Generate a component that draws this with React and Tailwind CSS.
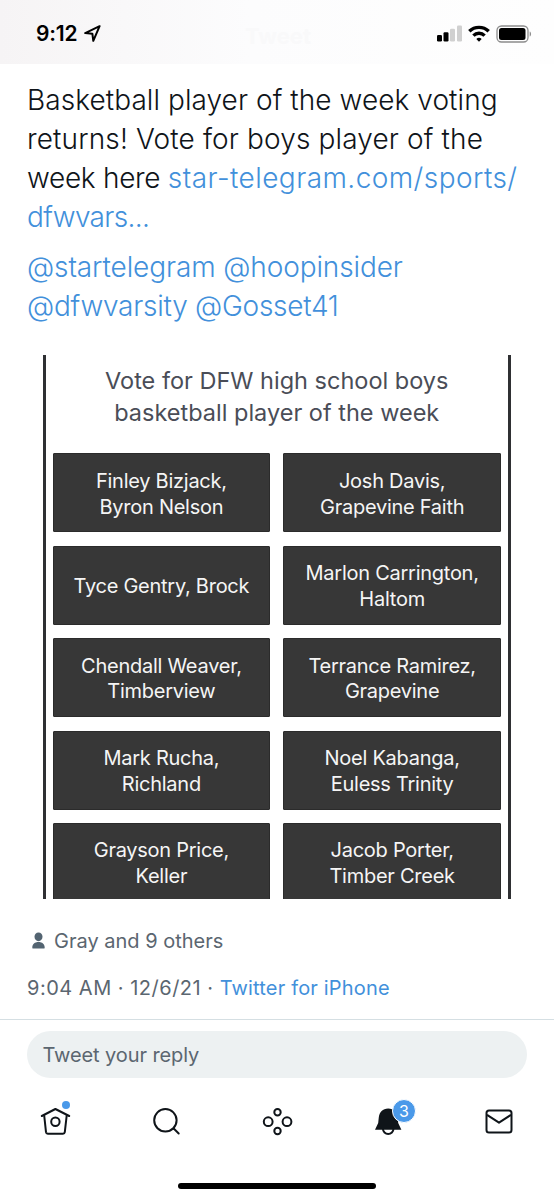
import React from 'react';

const players = [
  ['Finley Bizjack,', 'Byron Nelson'],
  ['Josh Davis,', 'Grapevine Faith'],
  ['Tyce Gentry, Brock'],
  ['Marlon Carrington,', 'Haltom'],
  ['Chendall Weaver,', 'Timberview'],
  ['Terrance Ramirez,', 'Grapevine'],
  ['Mark Rucha,', 'Richland'],
  ['Noel Kabanga,', 'Euless Trinity'],
  ['Grayson Price,', 'Keller'],
  ['Jacob Porter,', 'Timber Creek'],
];

const StatusBar = () => (
  <header className="relative h-16 shrink-0 flex items-center justify-between pl-[36px] pr-[22px] pt-[3px] bg-linear-to-r from-[#f6f4f5] via-[#fcfcfd] via-45% to-[#fefefe]">
    <div className="flex items-center gap-[7px]">
      <span className="text-[21px] leading-6 font-semibold tracking-[-0.2px] text-black">9:12</span>
      <svg width="17" height="17" viewBox="0 0 17 17" fill="none" stroke="#000" strokeWidth="2" strokeLinejoin="round">
        <path d="M15.6 1.2 1.2 8.1 8.4 8.8 9.3 15.8Z" />
      </svg>
    </div>
    <span className="absolute left-[245px] top-[22px] text-[22px] leading-7 font-bold text-[#f9f9fa]">Tweet</span>
    <div className="flex items-center">
      <svg width="26" height="17" viewBox="0 0 26 17">
        <rect x="0" y="10" width="5" height="6.5" rx="1.2" fill="#000" />
        <rect x="6.5" y="7.3" width="5" height="9.2" rx="1.2" fill="#000" />
        <rect x="13" y="3.8" width="5" height="12.7" rx="1.2" fill="#d0d0d0" />
        <rect x="20" y="0.5" width="5" height="16" rx="1.2" fill="#d0d0d0" />
      </svg>
      <svg className="ml-[5px]" width="22" height="17" viewBox="0 0 22 17" fill="none" stroke="#000" strokeWidth="3.4">
        <path d="M1.3 6.3a13.9 13.9 0 0 1 19.4 0" />
        <path d="M5.4 10.6a8 8 0 0 1 11.2 0" />
        <path d="M11 16.8 8.3 14a3.9 3.9 0 0 1 5.4 0Z" fill="#000" stroke="none" />
      </svg>
      <svg className="ml-[6px]" width="36" height="18" viewBox="0 0 36 18">
        <rect x="1" y="1" width="31" height="16" rx="4.5" fill="none" stroke="#8c8c8c" strokeWidth="1.3" />
        <rect x="3" y="3" width="26.5" height="12" rx="2.5" fill="#000" />
        <path d="M33.7 6.5c1.8.6 1.8 4.4 0 5Z" fill="#8c8c8c" />
      </svg>
    </div>
  </header>
);

const TweetText = () => (
  <div className="pt-[17px] pl-[27px] text-[28px] leading-[39.1px] font-light text-[#0f1419] whitespace-nowrap">
    <p className="tracking-[0.07px]">Basketball player of the week voting</p>
    <p className="tracking-[0.14px]">returns! Vote for boys player of the</p>
    <p>
      <span className="tracking-[-0.3px]">week here </span>
      <span className="tracking-[0.43px] text-[#4290db]">star-telegram.com/sports/</span>
    </p>
    <p className="tracking-[-0.65px] text-[#4290db]">dfwvars...</p>
    <p className="mt-[10.5px] tracking-[-0.11px] text-[#4290db]">@startelegram @hoopinsider</p>
    <p className="tracking-[-0.26px] text-[#4290db]">@dfwvarsity @Gosset41</p>
  </div>
);

const PollCard = () => (
  <section className="mt-[28.6px] mx-[43px] h-[544px] overflow-hidden border-x-3 border-[#2f3033] pl-[6.5px] pr-[7px]">
    <h2 className="pt-[10px] text-center text-[23.5px] leading-8 font-normal text-[#4a4d57] whitespace-nowrap">
      Vote for DFW high school boys
      <br />
      basketball player of the week
    </h2>
    <div className="mt-[24.7px] grid grid-cols-2 gap-x-[13px] gap-y-[13.4px]">
      {players.map((lines) => (
        <div
          key={lines[0]}
          className="h-[79px] flex flex-col items-center justify-center rounded-[1px] border border-[#2b2b2b] bg-[#373737] pt-[3.5px] text-[20px] leading-[25.7px] tracking-[-0.26px] text-[#f5f5f5] whitespace-nowrap"
        >
          {lines.map((line) => (
            <span key={line}>{line}</span>
          ))}
        </div>
      ))}
    </div>
  </section>
);

const TabBar = () => (
  <nav className="flex h-[44px] mt-[22px] justify-between px-[39px]">
    {/* home */}
    <div className="relative w-8 h-11">
      <svg width="32" height="44" viewBox="0 0 32 44" fill="none" stroke="#0f1419" strokeWidth="2" strokeLinecap="round" strokeLinejoin="round">
        <path d="M2.8 16 16.4 9 30.2 16" />
        <path d="M5.2 15.5 7 32.2Q7.2 33.7 8.8 33.7H24Q25.6 33.7 25.8 32.2L27.7 15.5" />
        <circle cx="16.4" cy="21.8" r="4.2" />
      </svg>
      <span className="absolute left-[23px] top-[1px] size-2 rounded-full bg-[#4a99e9]" />
    </div>
    {/* search */}
    <svg width="32" height="44" viewBox="0 0 32 44" fill="none" stroke="#0f1419" strokeWidth="2" strokeLinecap="round">
      <circle cx="15.4" cy="20.3" r="11.2" />
      <path d="m23.7 28.5 5 5" />
    </svg>
    {/* spaces */}
    <svg width="32" height="44" viewBox="0 0 32 44" fill="none" stroke="#0f1419" strokeWidth="2">
      <circle cx="16.5" cy="12.3" r="3.2" />
      <circle cx="16.5" cy="31" r="3.2" />
      <circle cx="7.2" cy="21.7" r="4.4" />
      <circle cx="26" cy="21.7" r="4.4" />
    </svg>
    {/* notifications */}
    <div className="relative w-8 h-11">
      <svg width="32" height="44" viewBox="0 0 32 44">
        <path d="M16.2 8.5c5.5 0 8.8 3.7 9.4 8.8l.6 5.6 3.2 6.8H3l3.2-6.8.6-5.6c.6-5.1 3.9-8.8 9.4-8.8Z" fill="#0f1419" />
        <path d="M11 28.5v.4a5.2 5.2 0 0 0 10.4 0v-.4" fill="none" stroke="#0f1419" strokeWidth="2" />
      </svg>
      <span className="absolute left-[20px] -top-[1px] flex size-[24px] items-center justify-center rounded-full border-[1.5px] border-white bg-[#4a99e9] text-[16px] leading-none text-white">
        3
      </span>
    </div>
    {/* messages */}
    <svg width="32" height="44" viewBox="0 0 32 44" fill="none" stroke="#0f1419" strokeWidth="2" strokeLinejoin="round">
      <rect x="3.5" y="10.5" width="25" height="22" rx="2.5" />
      <path d="M4 14.8 16 22.7 28 14.8" />
    </svg>
  </nav>
);

const App = () => {
  return (
    <div className="w-[554px] h-[1200px] overflow-hidden flex flex-col bg-white font-['Inter',sans-serif]">
      <StatusBar />
      <TweetText />
      <PollCard />
      <div className="mt-[29px] flex items-center pl-[32px] text-[20px] leading-[26px] text-[#5b6670]">
        <svg className="mr-[9px]" width="13" height="17" viewBox="0 0 13 17" fill="#536471">
          <path d="M6.5.5c2.4 0 4 1.9 4 4.3S8.9 9.2 6.500 9.200 2.500 7.200 2.500 4.800 4.100.5 6.500.5Z" />
          <path d="M.3 15.4C.3 12 2.800 9.900 6.500 9.900s6.200 2.100 6.200 5.500c0 .8-.4 1.200-1.200 1.200h-10c-.8 0-1.200-.4-1.200-1.200Z" />
        </svg>
        <span>Gray and 9 others</span>
      </div>
      <div className="mt-[21px] pl-[27px] text-[20px] leading-[26px] text-[#5b6670] whitespace-nowrap">
        <span className="tracking-[0.5px]">9:04 AM · 12/6/21 · </span>
        <span className="tracking-[0.17px] text-[#4290db]">Twitter for iPhone</span>
      </div>
      <footer className="mt-[18px] border-t border-[#d5dfe3] flex flex-col">
        <div className="mt-[11px] mx-[27px] h-[47px] flex items-center rounded-full bg-[#edf1f2] pl-[15.5px] pt-[1px] text-[20px] text-[#5b6670]">
          <span className="tracking-[-0.1px]">Tweet your reply</span>
        </div>
        <TabBar />
        <div className="mt-[39px] h-[6px] w-[198px] self-center rounded-full bg-black" />
      </footer>
    </div>
  );
};

export default App;
